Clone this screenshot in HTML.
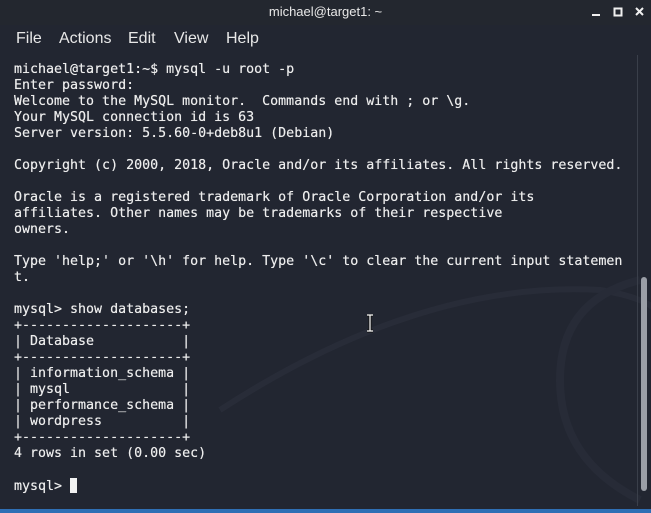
<!DOCTYPE html>
<html><head><meta charset="utf-8"><style>
html,body{margin:0;padding:0;width:651px;height:513px;overflow:hidden;background:#222631;}
#title{position:absolute;left:0;top:0;width:651px;height:25px;background:#23272f;color:#e8e8e8;font:13px "Liberation Sans",sans-serif;text-align:center;line-height:24px;}
#menu{position:absolute;left:0;top:25px;width:651px;height:30px;background:#222631;color:#e8e8e8;font:16px "Liberation Sans",sans-serif;}
#menu span{position:absolute;top:5px;}
#term{position:absolute;left:14px;top:62px;margin:0;font:13.3px/16px "DejaVu Sans Mono","Liberation Mono",monospace;color:#ececec;white-space:pre;text-shadow:0 0 0.4px #fff;}
.cur{display:inline-block;width:7px;height:15px;background:#f2f2f2;vertical-align:-3px;}
</style></head><body>
<svg width="651" height="513" style="position:absolute;left:0;top:0">
<path d="M220 410 Q420 280 600 290 Q660 300 660 320" stroke="#282c38" stroke-width="6" fill="none"/>
<path d="M640 500 Q560 460 560 380 Q560 300 640 280" stroke="#272b37" stroke-width="8" fill="none"/>
<line x1="637.5" y1="50" x2="637.5" y2="506" stroke="#3a3f4a" stroke-width="1"/>
<rect x="641" y="277" width="6" height="214" rx="3" fill="#9a9ea6"/>
<rect x="0" y="509" width="651" height="4" fill="#2f6fb5"/>
</svg>
<div id="title">michael@target1: ~
<svg width="60" height="20" style="position:absolute;left:590px;top:3px">
<rect x="2" y="11" width="8" height="2" fill="#f0f0f0"/>
<rect x="24.5" y="5.5" width="7" height="7" fill="none" stroke="#f0f0f0" stroke-width="2"/>
<path d="M46 5 L53 12 M53 5 L46 12" stroke="#f0f0f0" stroke-width="2"/>
</svg></div>
<div id="menu"><span style="left:16px">File</span><span style="left:59px">Actions</span><span style="left:128px">Edit</span><span style="left:174px">View</span><span style="left:226px">Help</span></div>
<pre id="term">michael@target1:~$ mysql -u root -p
Enter password:
Welcome to the MySQL monitor.  Commands end with ; or \g.
Your MySQL connection id is 63
Server version: 5.5.60-0+deb8u1 (Debian)

Copyright (c) 2000, 2018, Oracle and/or its affiliates. All rights reserved.

Oracle is a registered trademark of Oracle Corporation and/or its
affiliates. Other names may be trademarks of their respective
owners.

Type 'help;' or '\h' for help. Type '\c' to clear the current input statemen
t.

mysql> show databases;
+--------------------+
| Database           |
+--------------------+
| information_schema |
| mysql              |
| performance_schema |
| wordpress          |
+--------------------+
4 rows in set (0.00 sec)

mysql> <span class="cur"></span></pre>
<svg width="10" height="20" style="position:absolute;left:365px;top:314px"><path d="M2 1H8M5 1V17M2 17H8" stroke="#111" stroke-width="3"/><path d="M2 1H8M5 1V17M2 17H8" stroke="#fff" stroke-width="1.2"/></svg>
</body></html>
